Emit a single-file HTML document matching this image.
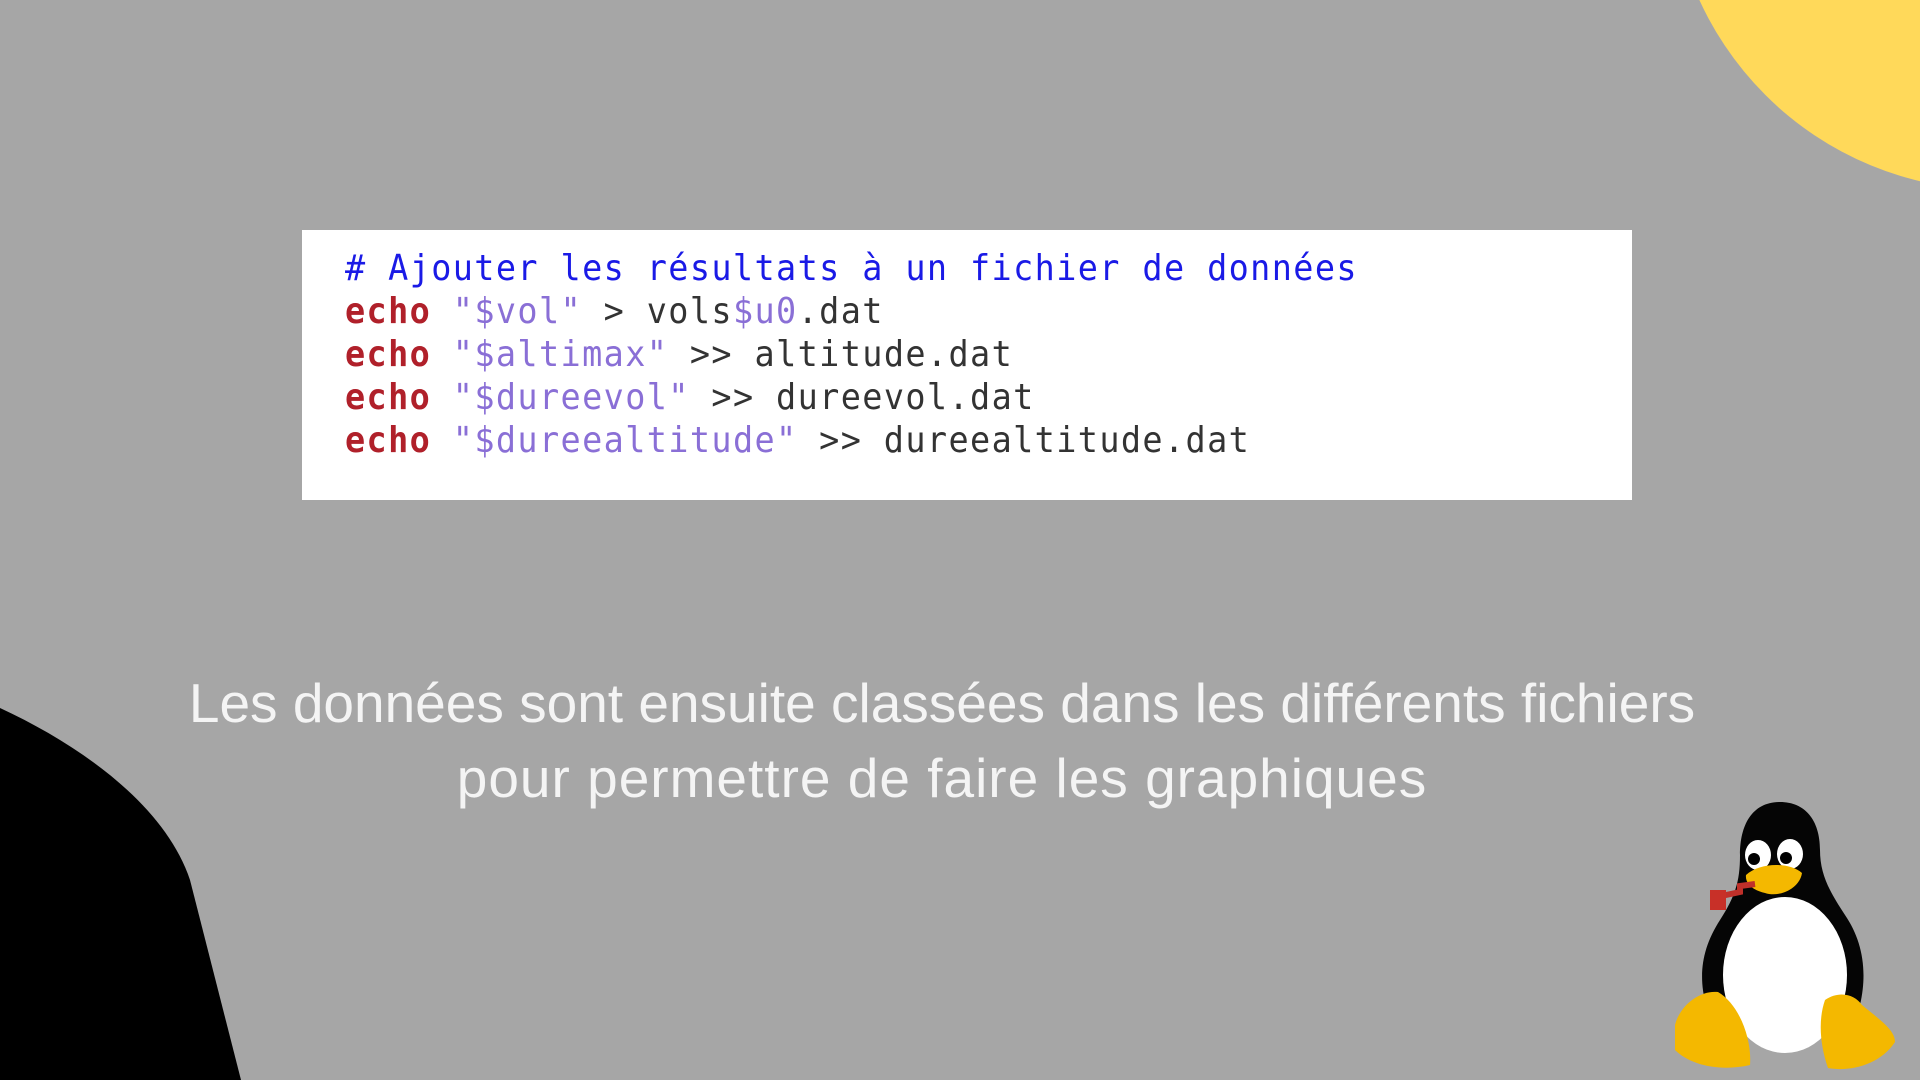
<!DOCTYPE html>
<html><head><meta charset="utf-8"><style>
html,body{margin:0;padding:0}
body{width:1920px;height:1080px;background:#a6a6a6;position:relative;overflow:hidden;font-family:"Liberation Sans",sans-serif}
.code{position:absolute;left:302px;top:230px;width:1330px;height:270px;background:#fff}
.code pre{margin:0;position:absolute;left:43px;top:17px;font-family:"DejaVu Sans Mono","Liberation Mono",monospace;font-size:36px;line-height:43px;color:#333;transform:scaleX(0.93);transform-origin:left top;letter-spacing:1.5px}
.c{color:#1a1ae6}.k{color:#b0202a;font-weight:bold}.s{color:#8a6fd6}
.cap{position:absolute;left:-18px;width:1920px;top:666px;text-align:center;color:#f4f4f4;font-size:55px;line-height:75px}
.cap span{letter-spacing:1px}
svg{position:absolute}
</style></head><body>
<svg width="1920" height="1080" style="left:0;top:0">
<circle cx="1995" cy="-135" r="325" fill="#ffd95a"/>
<path d="M0,708 C80,745 165,805 190,880 L241,1080 L0,1080Z" fill="#000"/>
</svg>
<div class="code"><pre><span class="c"># Ajouter les résultats à un fichier de données</span>
<span class="k">echo</span> <span class="s">"$vol"</span> &gt; vols<span class="s">$u0</span>.dat
<span class="k">echo</span> <span class="s">"$altimax"</span> &gt;&gt; altitude.dat
<span class="k">echo</span> <span class="s">"$dureevol"</span> &gt;&gt; dureevol.dat
<span class="k">echo</span> <span class="s">"$dureealtitude"</span> &gt;&gt; dureealtitude.dat</pre></div>
<div class="cap">Les données sont ensuite classées dans les différents fichiers<br><span>pour permettre de faire les graphiques</span></div>
<svg width="280" height="300" style="left:1640px;top:780px" viewBox="0 0 280 300">
<path d="M140,22 C112,22 100,45 100,75 C100,100 96,115 80,140 C62,168 58,195 66,225 L220,225 C228,190 222,160 205,135 C190,112 180,95 180,70 C180,40 165,22 140,22Z" fill="#050505"/>
<ellipse cx="145" cy="195" rx="62" ry="78" fill="#fff"/>
<ellipse cx="118" cy="75" rx="13" ry="15" fill="#fff"/><ellipse cx="150" cy="74" rx="13" ry="15" fill="#fff"/>
<circle cx="114" cy="79" r="6" fill="#000"/><circle cx="146" cy="78" r="6" fill="#000"/>
<path d="M106,95 C120,82 150,82 162,93 C160,108 140,118 125,113 C112,110 105,103 106,95Z" fill="#f4b800"/>
<path d="M72,118 L100,112 L100,106 L115,104" stroke="#c0302a" stroke-width="6" fill="none"/>
<rect x="70" y="110" width="16" height="20" fill="#c83028"/>
<path d="M35,245 C40,225 60,210 78,212 C100,225 112,260 110,285 C80,292 50,285 35,270Z" fill="#f4b800"/>
<path d="M185,220 C200,210 215,215 222,225 C240,240 255,250 255,262 C240,285 210,292 188,288 C180,265 178,240 185,220Z" fill="#f4b800"/>
</svg>
</body></html>
